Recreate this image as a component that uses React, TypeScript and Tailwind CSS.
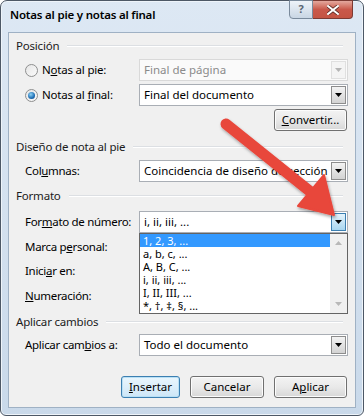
import React from 'react';

const DownArrow = ({ color = '#000' }: { color?: string }) => (
  <svg width="7" height="4" viewBox="0 0 7 4">
    <path d="M0 0h7L3.5 4z" fill={color} />
  </svg>
);

const UpArrow = ({ color = '#000' }: { color?: string }) => (
  <svg width="7" height="4" viewBox="0 0 7 4">
    <path d="M0 4h7L3.5 0z" fill={color} />
  </svg>
);

interface ComboProps {
  text: string;
  disabled?: boolean;
  focused?: boolean;
  children?: React.ReactNode;
}

const Combo: React.FC<ComboProps> = ({ text, disabled, focused, children }) => (
  <div
    className={`relative flex h-[22px] w-[209px] items-center border ${
      disabled ? 'border-[#d9d9d9] bg-[#fafafa]' : 'border-[#a9aeb5] bg-white'
    }`}
  >
    <span
      className={`flex-1 overflow-hidden whitespace-nowrap pl-[4px] text-[11.5px] ${
        disabled ? 'text-[#8b8b8b]' : 'text-black'
      }`}
    >
      {text}
    </span>
    <div
      className={`mr-[1px] flex h-[18px] w-[15px] shrink-0 items-center justify-center border ${
        disabled
          ? 'border-[#e0e0e0] bg-[#f4f4f4]'
          : focused
          ? 'border-[#3c7fb1] bg-gradient-to-b from-[#e5f4fc] to-[#a8d6f0]'
          : 'border-[#8d8d8d] bg-gradient-to-b from-[#f3f3f3] to-[#d3d3d3]'
      }`}
    >
      <DownArrow color={disabled ? '#b5b5b5' : '#000'} />
    </div>
    {children}
  </div>
);

const Header = ({ children }: { children: React.ReactNode }) => (
  <div className="flex h-[14px] items-center pl-[7px] pr-[5px]">
    <span className="whitespace-nowrap text-[11.5px] tracking-[-0.2px] text-[#1b1b1b]">{children}</span>
    <div className="ml-[8px] flex-1 border-b border-t border-[#dcdfe3] border-b-white" />
  </div>
);

const Row = ({ label, children, className = '' }: { label: React.ReactNode; children?: React.ReactNode; className?: string }) => (
  <div className={`flex h-[22px] items-center pl-[16px] ${className}`}>
    <div className="w-[114px] shrink-0 whitespace-nowrap text-[11.5px] tracking-[-0.3px] text-black">{label}</div>
    {children}
  </div>
);

const Btn = ({ children, primary }: { children: React.ReactNode; primary?: boolean }) => (
  <div
    className={`flex h-[22px] items-center justify-center rounded-[3px] border text-[11.5px] text-black ${
      primary
        ? 'border-[#3c7fb1] bg-gradient-to-b from-[#eaf6fd] to-[#cde6f7] shadow-[inset_0_0_0_1px_#b9e0f5]'
        : 'border-[#707070] bg-gradient-to-b from-[#f3f3f3] via-[#e9e9e9] to-[#d7d7d7] shadow-[inset_0_0_0_1px_#fcfcfc]'
    }`}
  >
    {children}
  </div>
);

const Radio = ({ checked }: { checked?: boolean }) => (
  <div className="flex h-[13px] w-[13px] shrink-0 items-center justify-center rounded-full border border-[#8e8f8f] bg-gradient-to-br from-[#e6e6e6] to-[#fafafa]">
    {checked && (
      <div className="h-[7px] w-[7px] rounded-full bg-[radial-gradient(circle_at_40%_35%,#8fd3f5,#1f6fb5_60%,#0f3f78)]" />
    )}
  </div>
);

const listItems = ['1, 2, 3, ...', 'a, b, c, ...', 'A, B, C, ...', 'i, ii, iii, ...', 'I, II, III, ...', '*, †, ‡, §, ...'];

export default function App() {
  return (
    <div className="relative h-[416px] w-[364px] overflow-hidden bg-white font-['Noto_Sans',sans-serif]">
      <div className="flex h-[416px] w-[364px] flex-col rounded-b-[6px] rounded-t-[7px] border border-[#4d5866] bg-gradient-to-b from-[#dde8f4] via-[#d4e1ef] to-[#c9d9ea] shadow-[inset_0_0_0_1px_#eef4fa]">
        {/* title bar */}
        <div className="relative flex h-[31px] items-center pl-[9px]">
          <span className="-mt-[4px] whitespace-nowrap text-[11.5px] font-semibold tracking-[-0.2px] text-black">Notas al pie y notas al final</span>
          <div className="absolute right-[10px] top-[-1px] flex h-[19px]">
            <div className="flex w-[24px] items-center justify-center rounded-bl-[4px] border border-[#7a8a9c] bg-gradient-to-b from-[#eef3f9] to-[#c9d6e4] text-[11px] font-bold text-[#5a6572]">
              ?
            </div>
            <div className="flex w-[40px] items-center justify-center rounded-br-[4px] border border-l-0 border-[#7c3a33] bg-gradient-to-b from-[#e3a89e] via-[#c9584a] to-[#c45443]">
              <svg width="12" height="10" viewBox="0 0 12 10">
                <path d="M1 1l10 8M11 1L1 9" stroke="#5b2a24" strokeWidth="3.6" strokeLinecap="square" />
                <path d="M1 1l10 8M11 1L1 9" stroke="#ffffff" strokeWidth="2" strokeLinecap="square" />
              </svg>
            </div>
          </div>
        </div>
        {/* client */}
        <div className="mx-[7px] flex flex-1 flex-col border border-[#9fb1c4] bg-[#f0f0f0] pb-[9px] pr-[7px] pt-[6px]">
          <Header>Posición</Header>
          <div className="mt-[6px] flex h-[22px] items-center pl-[16px]">
            <div className="flex w-[114px] shrink-0 items-center gap-[4px] whitespace-nowrap text-[11.5px] tracking-[-0.2px] text-black">
              <Radio />
              <span>N<u>o</u>tas al pie:</span>
            </div>
            <Combo text="Final de página" disabled />
          </div>
          <div className="mt-[3px] flex h-[22px] items-center pl-[16px]">
            <div className="flex w-[114px] shrink-0 items-center gap-[4px] whitespace-nowrap text-[11.5px] tracking-[-0.2px] text-black">
              <Radio checked />
              <span>Notas al <u>f</u>inal:</span>
            </div>
            <Combo text="Final del documento" />
          </div>
          <div className="mt-[3px] flex justify-end pr-[1px]">
            <div className="w-[73px]">
              <Btn>
                <u>C</u>onvertir...
              </Btn>
            </div>
          </div>

          <div className="mt-[9px]">
            <Header>Diseño de nota al pie</Header>
          </div>
          <Row className="mt-[6px]" label={<>Col<u>u</u>mnas:</>}>
            <Combo text="Coincidencia de diseño de sección" />
          </Row>

          <div className="mt-[7px]">
            <Header>Formato</Header>
          </div>
          <Row className="relative z-10 mt-[8px]" label={<>For<u>m</u>ato de número:</>}>
            <Combo text="i, ii, iii, ..." focused>
              <div className="absolute left-[-1px] right-[-1px] top-[21px] flex h-[81px] border border-[#646464] bg-white">
                <div className="flex-1">
                  {listItems.map((t, i) => (
                    <div
                      key={t}
                      className={`flex h-[13px] items-center overflow-hidden pl-[3px] text-[11px] leading-[13px] ${
                        i === 0 ? 'bg-[#3399ff] text-white' : 'text-black'
                      }`}
                    >
                      {t}
                    </div>
                  ))}
                </div>
                <div className="flex w-[17px] flex-col items-center justify-between bg-[#f0f0f0] py-[7px]">
                  <UpArrow color="#b8b8b8" />
                  <DownArrow color="#b8b8b8" />
                </div>
              </div>
            </Combo>
          </Row>
          <Row className="mt-[3px]" label={<>Marca p<u>e</u>rsonal:</>} />
          <Row className="mt-[2px]" label={<>Inici<u>a</u>r en:</>} />
          <Row className="mt-[3px]" label={<><u>N</u>umeración:</>} />

          <div className="mt-[8px]">
            <Header>Aplicar cambios</Header>
          </div>
          <Row className="mt-[5px]" label={<>Aplicar cam<u>b</u>ios a:</>}>
            <Combo text="Todo el documento" />
          </Row>

          <div className="mt-[20px] flex justify-end gap-[10px] pr-[1px]">
            <div className="w-[59px]">
              <Btn primary>
                <u>I</u>nsertar
              </Btn>
            </div>
            <div className="w-[74px]">
              <Btn>Cancelar</Btn>
            </div>
            <div className="w-[73px]">
              <Btn>
                A<u>p</u>licar
              </Btn>
            </div>
          </div>
        </div>
        <div className="h-[7px]" />
      </div>

      {/* red callout arrow */}
      <svg className="pointer-events-none absolute left-0 top-0 z-20" width="364" height="416">
        <defs>
          <filter id="sh" x="-20%" y="-20%" width="140%" height="140%">
            <feDropShadow dx="1" dy="2" stdDeviation="1.5" floodColor="#000" floodOpacity="0.35" />
          </filter>
        </defs>
        <g filter="url(#sh)">
          <line x1="226" y1="124" x2="312" y2="193" stroke="#e8463b" strokeWidth="11" strokeLinecap="round" />
          <path d="M334 215 L298 206 L324 175 Z" fill="#e8463b" stroke="#e8463b" strokeWidth="2" strokeLinejoin="round" />
        </g>
      </svg>
    </div>
  );
}
